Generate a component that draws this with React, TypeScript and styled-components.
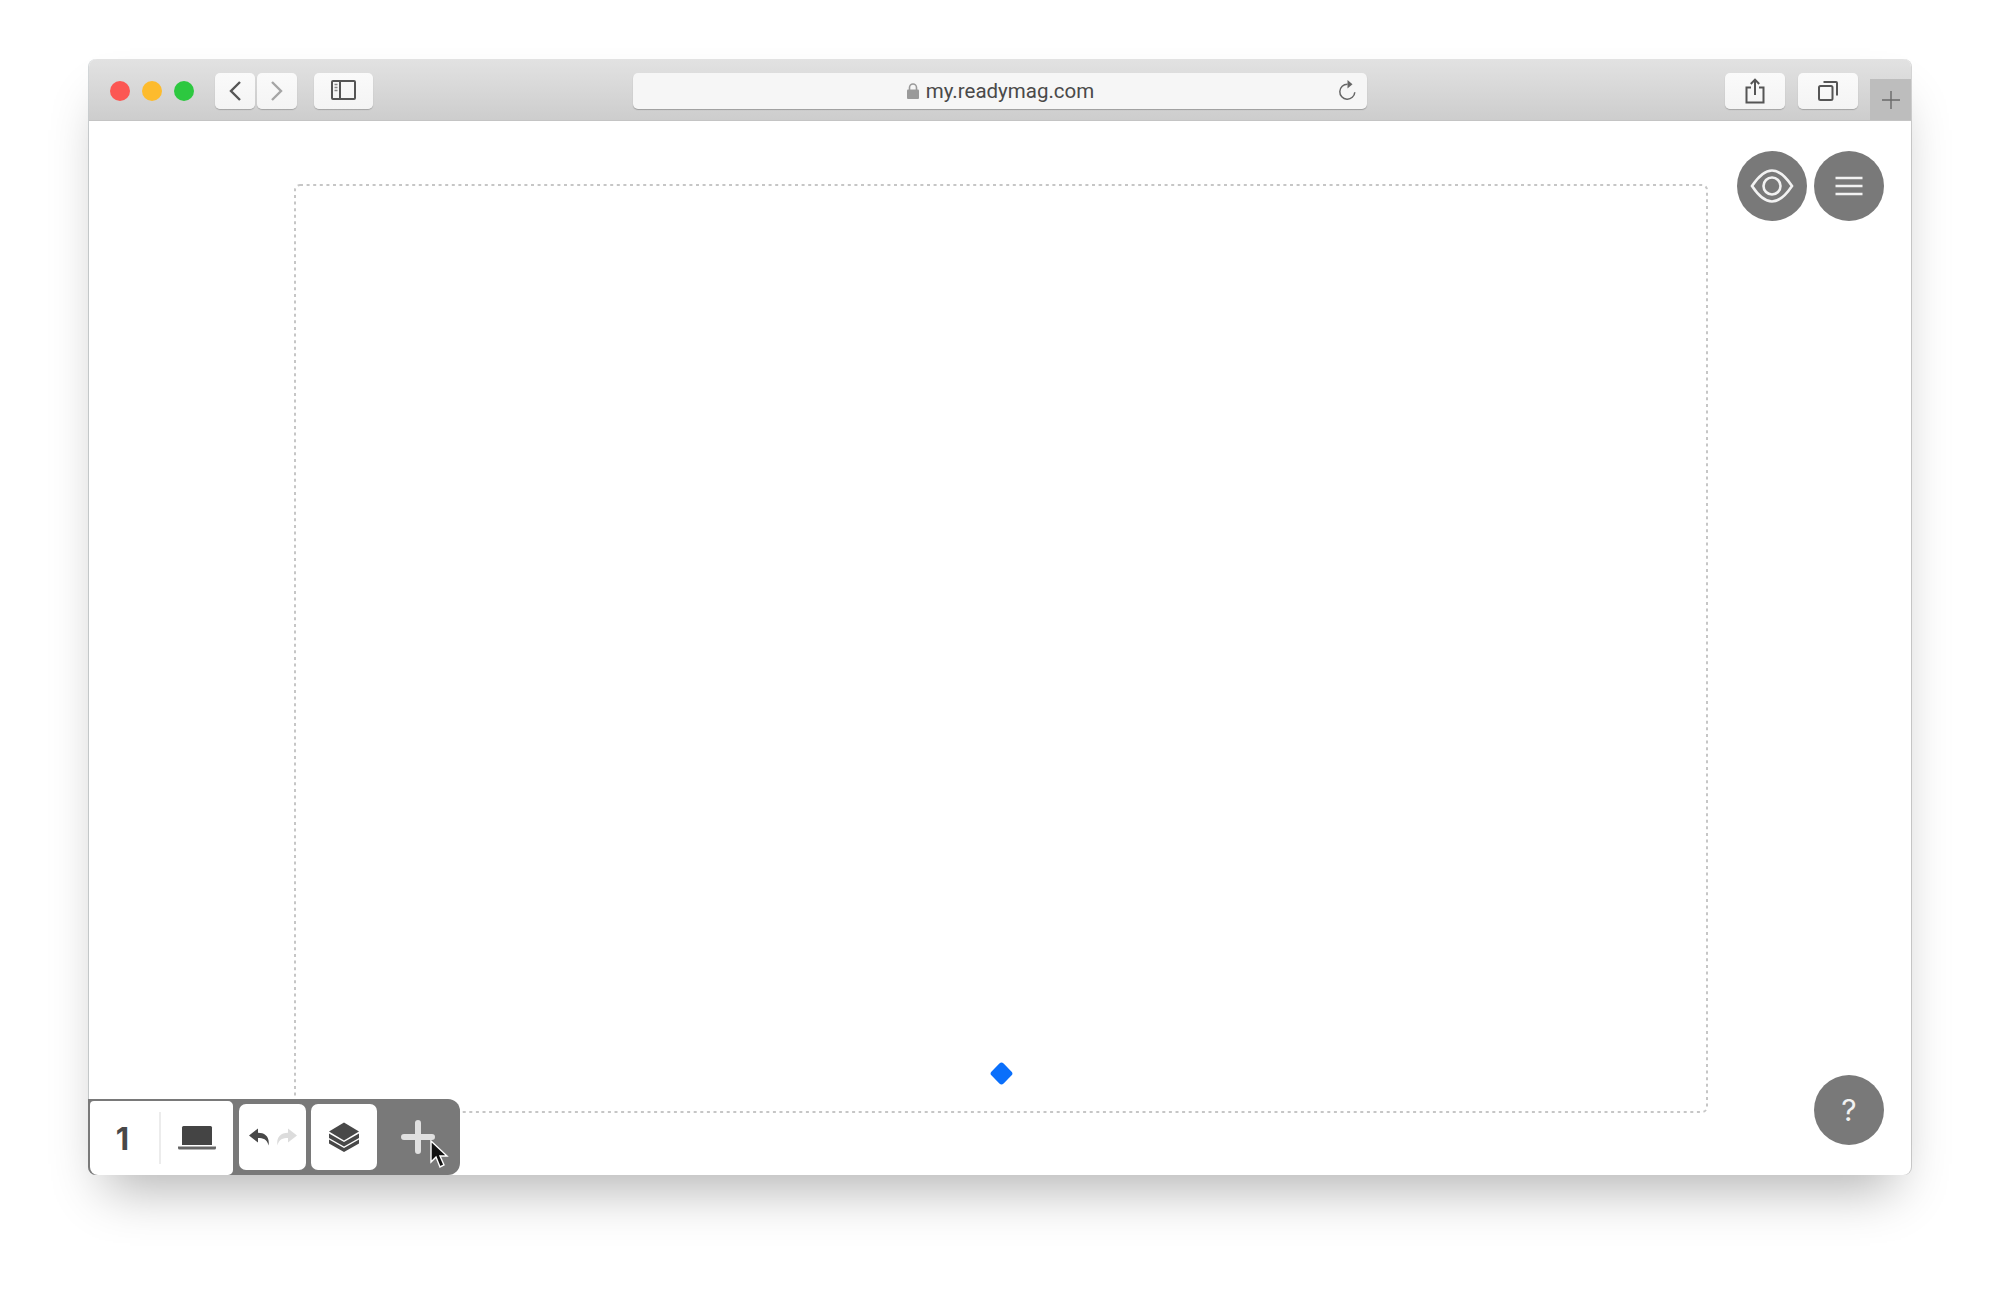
import React from "react";
import styled, { createGlobalStyle } from "styled-components";

const Global = createGlobalStyle`
  html, body { margin: 0; padding: 0; background: #fff; }
  body { font-family: "Liberation Sans", Arial, sans-serif; }
`;

const Page = styled.div`
  width: 2000px;
  height: 1294px;
  box-sizing: border-box;
  padding: 59px 89px 119px 89px;
  overflow: hidden;
`;

const Window = styled.div`
  height: 100%;
  display: flex;
  flex-direction: column;
  position: relative;
  border-radius: 8px;
  background: #fff;
  box-shadow: 0 30px 50px -16px rgba(0, 0, 0, 0.3), -1px 0 0 #d4d8da, 1px 0 0 #d6d6d6;
`;

const TitleBar = styled.header`
  height: 62px;
  flex: none;
  box-sizing: border-box;
  display: flex;
  align-items: center;
  padding: 2px 0 0 21px;
  background: linear-gradient(#e2e2e2, #cdcdcd);
  border-radius: 8px 8px 0 0;
  border-bottom: 1px solid #c4c4c4;
`;

const Lights = styled.div`
  display: flex;
  gap: 12px;
  margin-right: 21px;
`;

const Light = styled.span<{ $color: string }>`
  width: 20px;
  height: 20px;
  border-radius: 50%;
  background: ${(p) => p.$color};
`;

const ToolButton = styled.button<{ $width: number; $gap?: number }>`
  width: ${(p) => p.$width}px;
  height: 36px;
  flex: none;
  margin-left: ${(p) => p.$gap ?? 0}px;
  padding: 0;
  display: flex;
  align-items: center;
  justify-content: center;
  border: none;
  border-radius: 5px;
  background: linear-gradient(#fafafa, #f4f4f4);
  box-shadow: 0 1px 1px rgba(0, 0, 0, 0.22);
`;

const UrlBar = styled.div`
  width: 734px;
  height: 36px;
  flex: none;
  margin-left: 260px;
  box-sizing: border-box;
  position: relative;
  display: flex;
  align-items: center;
  justify-content: center;
  gap: 6px;
  border-radius: 5px;
  background: #f6f6f6;
  box-shadow: 0 1px 1px rgba(0, 0, 0, 0.25);
  color: #4a4a4a;
  font-family: "Roboto", "Liberation Sans", sans-serif;
  font-size: 20.5px;
`;

const Reload = styled.span`
  position: absolute;
  right: 10px;
  top: 6px;
  display: flex;
`;

const NewTab = styled.div`
  width: 41px;
  height: 41px;
  flex: none;
  align-self: flex-end;
  margin-left: 12px;
  display: flex;
  align-items: center;
  justify-content: center;
  background: #bdbdbd;
`;

const Content = styled.main`
  flex: 1;
  min-height: 0;
  position: relative;
  display: flex;
  box-sizing: border-box;
  padding: 63px 203px 62px 205px;
`;

const Canvas = styled.div`
  flex: 1;
  position: relative;
`;

const CanvasOutline = styled.svg`
  position: absolute;
  inset: 0;
  width: 100%;
  height: 100%;
`;

const Diamond = styled.span`
  position: absolute;
  left: 904px;
  top: 944px;
  width: 17px;
  height: 17px;
  border-radius: 3px;
  background: #0a6ffb;
  transform: rotate(45deg);
`;

const RoundButton = styled.button<{ $x: number; $y: number }>`
  position: absolute;
  left: ${(p) => p.$x}px;
  top: ${(p) => p.$y}px;
  width: 70px;
  height: 70px;
  padding: 0;
  border: none;
  border-radius: 50%;
  background: #797979;
  color: #f2f2f2;
  display: flex;
  align-items: center;
  justify-content: center;
  font-family: "Inter", "Liberation Sans", sans-serif;
  font-size: 30px;
  font-weight: 400;
`;

const Toolbar = styled.div`
  position: absolute;
  left: -1px;
  bottom: 0;
  height: 76px;
  display: flex;
  border-radius: 0 12px 12px 8px;
  background: #797979;
  overflow: hidden;
`;

const WhiteSection = styled.div`
  width: 143px;
  margin: 2px 0 0 2px;
  display: flex;
  align-items: center;
  background: #fff;
  border-radius: 4px 5px 5px 8px;
`;

const PageNumber = styled.div`
  width: 71px;
  height: 52px;
  box-sizing: border-box;
  padding-right: 4px;
  border-right: 2px solid #ececec;
  display: flex;
  align-items: center;
  justify-content: center;
  color: #484848;
  font-family: "Inter", "Liberation Sans", sans-serif;
  font-size: 31px;
  font-weight: 700;
`;

const DeviceSlot = styled.div`
  flex: 1;
  display: flex;
  justify-content: center;
`;

const ToolTile = styled.div<{ $width: number; $gap: number }>`
  width: ${(p) => p.$width}px;
  height: 66px;
  margin: 5px 0 0 ${(p) => p.$gap}px;
  border-radius: 7px;
  background: #fff;
  display: flex;
  align-items: center;
  justify-content: center;
  gap: 6px;
`;

const PlusSlot = styled.div`
  width: 83px;
  position: relative;
  display: flex;
  align-items: center;
  justify-content: center;
  padding-right: 1px;
  box-sizing: border-box;
`;

const Cursor = styled.span`
  position: absolute;
  left: 52px;
  top: 41px;
  display: flex;
`;

const Stroke = { fill: "none", stroke: "#555", strokeWidth: 2 } as const;

export default function App() {
  return (
    <Page>
      <Global />
      <Window>
        <TitleBar>
          <Lights>
            <Light $color="#fc5753" />
            <Light $color="#fdbb2d" />
            <Light $color="#2dc840" />
          </Lights>
          <ToolButton $width={40} aria-label="Back">
            <svg width="16" height="22" viewBox="0 0 16 22">
              <path d="M13 2 4 11l9 9" fill="none" stroke="#555" strokeWidth="2.4" />
            </svg>
          </ToolButton>
          <ToolButton $width={40} $gap={2} aria-label="Forward">
            <svg width="16" height="22" viewBox="0 0 16 22">
              <path d="M3 2l9 9-9 9" fill="none" stroke="#a5a5a5" strokeWidth="2.4" />
            </svg>
          </ToolButton>
          <ToolButton $width={59} $gap={17} aria-label="Sidebar">
            <svg width="26" height="21" viewBox="0 0 26 21">
              <rect x="1" y="1" width="23" height="18" rx="1" {...Stroke} />
              <path d="M9 1v18" {...Stroke} />
              <path d="M3.5 4.5h3M3.5 7.5h3M3.5 10.5h3" stroke="#888" strokeWidth="1.4" />
            </svg>
          </ToolButton>
          <UrlBar>
            <svg width="14" height="18" viewBox="0 0 14 18">
              <path d="M3.5 8V5.5a3.5 3.5 0 0 1 7 0V8" fill="none" stroke="#9a9a9a" strokeWidth="1.6" />
              <rect x="1" y="7.5" width="12" height="9.5" rx="1" fill="#9a9a9a" />
            </svg>
            <span>my.readymag.com</span>
            <Reload>
              <svg width="20" height="24" viewBox="0 0 20 24">
                <path d="M10.5 5.2a7.5 7.5 0 1 0 7.3 8" fill="none" stroke="#666" strokeWidth="1.5" />
                <path d="M10.5 1v8.4l5-4.2z" fill="#666" />
              </svg>
            </Reload>
          </UrlBar>
          <ToolButton $width={60} $gap={358} aria-label="Share">
            <svg width="20" height="26" viewBox="0 0 20 26">
              <path d="M6 9.5H1.5v15h17v-15H14" {...Stroke} />
              <path d="M10 17V2M5.8 6 10 1.6 14.2 6" {...Stroke} />
            </svg>
          </ToolButton>
          <ToolButton $width={60} $gap={13} aria-label="Tabs">
            <svg width="20" height="20" viewBox="0 0 20 20">
              <rect x="1" y="5" width="13.5" height="14" rx="1.5" {...Stroke} />
              <path d="M5.5 1h12.5a1 1 0 0 1 1 1v12.5" {...Stroke} />
            </svg>
          </ToolButton>
          <NewTab aria-label="New tab">
            <svg width="20" height="20" viewBox="0 0 20 20">
              <path d="M10 1v18M1 10h18" stroke="#6a6a6a" strokeWidth="1.4" />
            </svg>
          </NewTab>
        </TitleBar>
        <Content>
          <Canvas>
            <CanvasOutline viewBox="0 0 1414 929">
              <rect x="1" y="1" width="1412" height="927" rx="5" fill="none" stroke="#c6c6c6" strokeWidth="2" strokeDasharray="3 3.6" />
            </CanvasOutline>
          </Canvas>
          <Diamond />
          <RoundButton $x={1648} $y={30} aria-label="Preview">
            <svg width="44" height="34" viewBox="0 0 44 34">
              <path d="M2 17C8 8 14 1.5 22 1.5S36 8 42 17C36 26 30 32.5 22 32.5S8 26 2 17Z" fill="none" stroke="#f2f2f2" strokeWidth="2.6" />
              <circle cx="22" cy="17" r="8.5" fill="none" stroke="#f2f2f2" strokeWidth="2.6" />
            </svg>
          </RoundButton>
          <RoundButton $x={1725} $y={30} aria-label="Menu">
            <svg width="30" height="20" viewBox="0 0 30 20">
              <path d="M1.5 2h27M1.5 10h27M1.5 18h27" stroke="#f2f2f2" strokeWidth="2.4" />
            </svg>
          </RoundButton>
          <RoundButton $x={1725} $y={954}>?</RoundButton>
          <Toolbar>
            <WhiteSection>
              <PageNumber>1</PageNumber>
              <DeviceSlot>
                <svg width="40" height="26" viewBox="0 0 40 26">
                  <path d="M5 2.5A1.5 1.5 0 0 1 6.5 1h27A1.5 1.5 0 0 1 35 2.5V20H5z" fill="#444" />
                  <path d="M1 21.5h38V23a1.5 1.5 0 0 1-1.5 1.500h-35A1.5 1.5 0 0 1 1 23z" fill="#666" />
                </svg>
              </DeviceSlot>
            </WhiteSection>
            <ToolTile $width={67} $gap={6}>
              <svg width="22" height="18" viewBox="0 0 22 18">
                <path d="M10 .5 1 7.5 10 14.5V10C15 10 19 11 20.5 17.5 22 9 17 4.8 10 4.8Z" fill="#484848" />
              </svg>
              <svg width="22" height="18" viewBox="0 0 22 18">
                <path d="M12 .5 21 7.5 12 14.5V10C7 10 3 11 1.5 17.5 0 9 5 4.8 12 4.8Z" fill="#dcdcdc" />
              </svg>
            </ToolTile>
            <ToolTile $width={66} $gap={5}>
              <svg width="32" height="30" viewBox="0 0 32 30" fill="#484848">
                <path d="M16 .5 31 9.5 16 18.500 1 9.5Z" />
                <path d="M1 11.500 16 20 31 11.500V16L16 24.500 1 16Z" />
                <path d="M1 17.500 16 26 31 17.500V21.500L16 30 1 21.500Z" />
              </svg>
            </ToolTile>
            <PlusSlot>
              <svg width="34" height="34" viewBox="0 0 34 34">
                <path d="M17 3v28M3 17h28" stroke="#e0e0e0" strokeWidth="6" strokeLinecap="round" />
              </svg>
              <Cursor>
                <svg width="20" height="30" viewBox="0 0 20 30">
                  <path d="M2 1v21l5-5 4 10 4-2-4-9h7Z" fill="#111" stroke="#fff" strokeWidth="1.4" />
                </svg>
              </Cursor>
            </PlusSlot>
          </Toolbar>
        </Content>
      </Window>
    </Page>
  );
}
